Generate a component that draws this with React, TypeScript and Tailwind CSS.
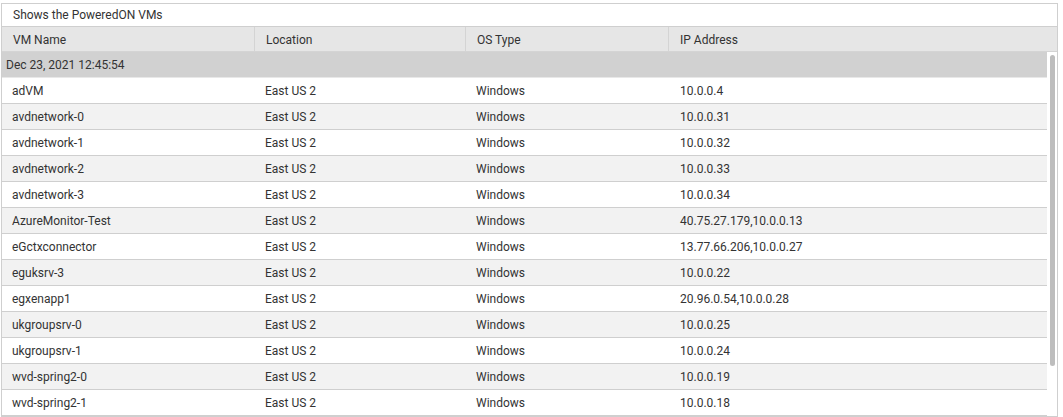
const rows: [string, string, string, string][] = [
  ['adVM', 'East US 2', 'Windows', '10.0.0.4'],
  ['avdnetwork-0', 'East US 2', 'Windows', '10.0.0.31'],
  ['avdnetwork-1', 'East US 2', 'Windows', '10.0.0.32'],
  ['avdnetwork-2', 'East US 2', 'Windows', '10.0.0.33'],
  ['avdnetwork-3', 'East US 2', 'Windows', '10.0.0.34'],
  ['AzureMonitor-Test', 'East US 2', 'Windows', '40.75.27.179,10.0.0.13'],
  ['eGctxconnector', 'East US 2', 'Windows', '13.77.66.206,10.0.0.27'],
  ['eguksrv-3', 'East US 2', 'Windows', '10.0.0.22'],
  ['egxenapp1', 'East US 2', 'Windows', '20.96.0.54,10.0.0.28'],
  ['ukgroupsrv-0', 'East US 2', 'Windows', '10.0.0.25'],
  ['ukgroupsrv-1', 'East US 2', 'Windows', '10.0.0.24'],
  ['wvd-spring2-0', 'East US 2', 'Windows', '10.0.0.19'],
  ['wvd-spring2-1', 'East US 2', 'Windows', '10.0.0.18'],
];

const headers = ['VM Name', 'Location', 'OS Type', 'IP Address'];

export default function App() {
  return (
    <div className="bg-white pt-[3px] pl-px h-[417px] overflow-hidden" style={{ fontFamily: 'Roboto, "Liberation Sans", sans-serif' }}>
      <div className="w-[1057px] border border-[#cfcfcf] text-[12px] text-[#333]">
        <div className="h-[23px] flex items-center pl-[11px] border-b border-[#cfcfcf]">
          Shows the PoweredON VMs
        </div>
        <div className="grid grid-cols-[253px_211px_203px_1fr] h-[25px] bg-[#e6e6e6] border-b border-[#d4d4d4]">
          {headers.map((h, i) => (
            <div key={h} className={`flex items-center pl-[11px] pt-px ${i < 3 ? 'border-r border-[#d4d4d4]' : ''}`}>
              {h}
            </div>
          ))}
        </div>
        <div className="flex">
          <div className="flex-1">
            <div className="h-[26px] flex items-center pl-[4px] bg-[#d1d1d1] border-b border-[#e8e8e8]">
              Dec 23, 2021 12:45:54
            </div>
            {rows.map((r, i) => (
              <div
                key={r[0]}
                className={`grid grid-cols-[253px_211px_203px_1fr] h-[26px] border-b border-[#cfcfcf] ${i % 2 === 1 ? 'bg-[#f2f2f2]' : 'bg-white'}`}
              >
                {r.map((c, j) => (
                  <div key={j} className={`flex items-center ${j === 3 ? 'pl-[11px]' : 'pl-[10px]'}`}>
                    {c}
                  </div>
                ))}
              </div>
            ))}
          </div>
          <div className="w-[10px] pt-[3px] flex justify-center">
            <div className="w-[5px] h-[311px] bg-[#bdbdbd] rounded-sm" />
          </div>
        </div>
      </div>
    </div>
  );
}
